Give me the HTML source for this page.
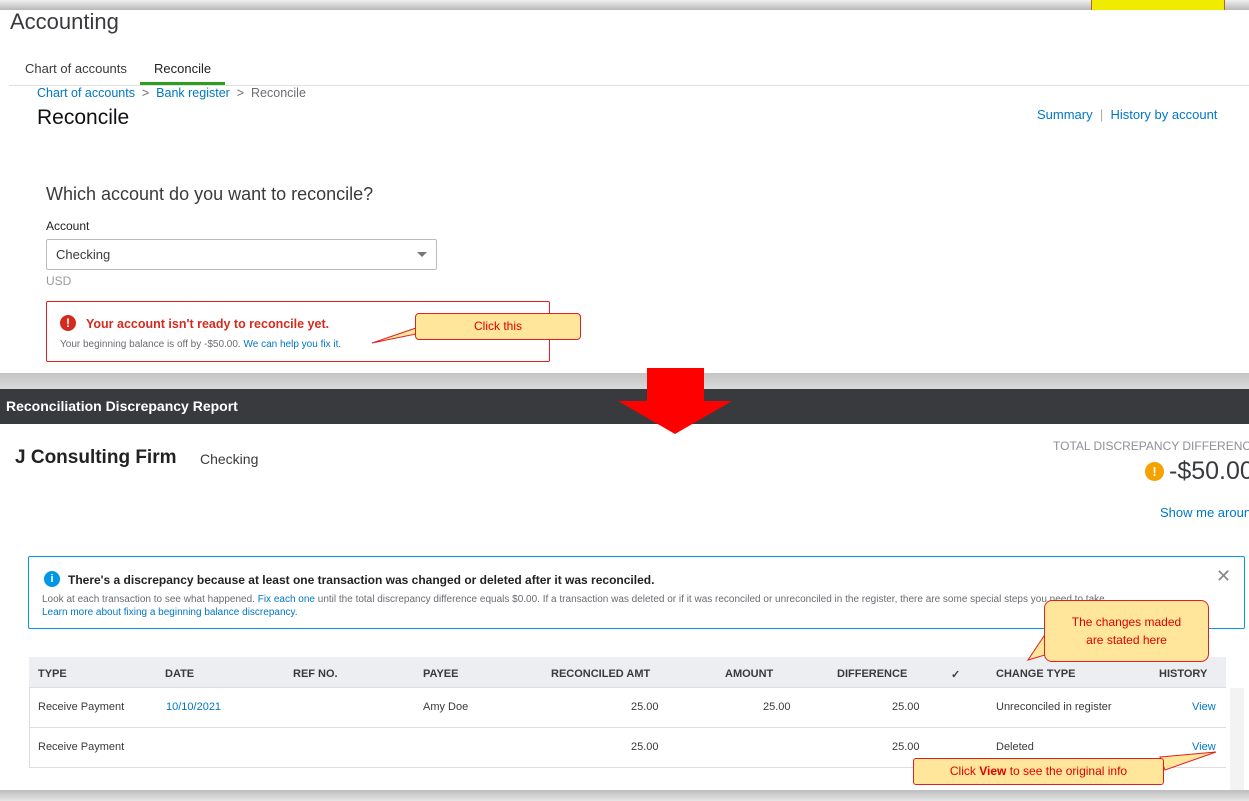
<!DOCTYPE html>
<html><head><meta charset="utf-8"><style>
*{margin:0;padding:0;box-sizing:border-box}
body{width:1249px;height:801px;position:relative;overflow:hidden;background:#d6d6d6;font-family:"Liberation Sans",sans-serif;color:#393a3d}
.a{position:absolute;white-space:nowrap}
.th{font-size:11px;font-weight:bold;color:#393a3d;top:668px}
.td{font-size:11px;color:#393a3d}
.blue{color:#0077c5 !important}
</style></head><body>
<div class="a" style="left:0;top:0;width:1249px;height:10px;background:linear-gradient(#f0f0f0,#b8b8b8)"></div>
<div class="a" style="left:1091px;top:0;width:134px;height:10px;background:#f0ec00;border-left:1px solid #c06020;border-right:1px solid #c06020"></div>
<!-- top panel -->
<div class="a" style="left:0;top:10px;width:1249px;height:363px;background:#fff"></div>
<div class="a" style="left:10px;top:9px;font-size:22px;color:#393a3d">Accounting</div>
<div class="a" style="left:25px;top:61px;font-size:13px">Chart of accounts</div>
<div class="a" style="left:154px;top:61px;font-size:13px;color:#222">Reconcile</div>
<div class="a" style="left:140px;top:82px;width:85px;height:3px;background:#2ca01c"></div>
<div class="a" style="left:9px;top:85px;width:1240px;height:1px;background:#e0e0e0"></div>
<div class="a" style="left:37px;top:86px;font-size:12.5px;color:#6b6c72"><span class="blue">Chart of accounts</span> &nbsp;&gt;&nbsp; <span class="blue">Bank register</span> &nbsp;&gt;&nbsp; Reconcile</div>
<div class="a" style="left:37px;top:106px;font-size:21px;color:#111">Reconcile</div>
<div class="a" style="left:1037px;top:107px;font-size:13px" ><span class="blue">Summary</span> <span style="color:#aaa">&nbsp;|&nbsp;</span> <span class="blue">History by account</span></div>
<div class="a" style="left:46px;top:184px;font-size:18px;color:#393a3d">Which account do you want to reconcile?</div>
<div class="a" style="left:46px;top:219px;font-size:12px;color:#222">Account</div>
<div class="a" style="left:46px;top:239px;width:391px;height:31px;border:1px solid #bbb;border-radius:2px"></div>
<div class="a" style="left:56px;top:247px;font-size:13px;color:#393a3d">Checking</div>
<div class="a" style="left:417px;top:252px;width:0;height:0;border-left:5px solid transparent;border-right:5px solid transparent;border-top:5px solid #777"></div>
<div class="a" style="left:46px;top:274px;font-size:12px;color:#999">USD</div>
<div class="a" style="left:46px;top:301px;width:504px;height:61px;border:1px solid #e02020;border-radius:2px"></div>
<div class="a" style="left:60px;top:315px;width:16px;height:16px;border-radius:50%;background:#d52b1e;color:#fff;font-size:12px;font-weight:bold;text-align:center;line-height:16px">!</div>
<div class="a" style="left:86px;top:317px;font-size:12.5px;font-weight:bold;color:#d52b1e">Your account isn't ready to reconcile yet.</div>
<div class="a" style="left:60px;top:339px;font-size:10px;color:#6b6c72">Your beginning balance is off by -$50.00. <span class="blue">We can help you fix it.</span></div>
<svg class="a" style="left:320px;top:310px" width="120" height="45"><polygon points="96,18 52,33 96,24" fill="#ffe69a" stroke="#e02020" stroke-width="1"/></svg>
<div class="a" style="left:415px;top:313px;width:166px;height:27px;background:#ffe69a;border:1px solid #e02020;border-radius:4px;color:#e00000;font-size:12px;text-align:center;line-height:25px">Click this</div>
<!-- gray band -->
<div class="a" style="left:0;top:373px;width:1249px;height:16px;background:linear-gradient(#c4c4c4,#dadada)"></div>
<!-- bottom panel -->
<div class="a" style="left:0;top:389px;width:1249px;height:35px;background:#393a3d"></div>
<div class="a" style="left:6px;top:398px;font-size:14px;font-weight:bold;color:#fff">Reconciliation Discrepancy Report</div>
<div class="a" style="left:0;top:424px;width:1249px;height:366px;background:#fff"></div>
<div class="a" style="left:0;top:790px;width:1249px;height:11px;background:linear-gradient(#bdbdbd,#e6e6e6)"></div>
<div class="a" style="left:15px;top:447px;font-size:19px;font-weight:bold;color:#222">J Consulting Firm</div>
<div class="a" style="left:200px;top:451px;font-size:14px;color:#393a3d">Checking</div>
<div class="a" style="left:1053px;top:439px;font-size:12px;color:#8d9096">TOTAL DISCREPANCY DIFFERENCE</div>
<div class="a" style="left:1145px;top:462px;width:19px;height:19px;border-radius:50%;background:#f5a100;color:#fff;font-size:13px;font-weight:bold;text-align:center;line-height:19px">!</div>
<div class="a" style="left:1169px;top:457px;font-size:25px;color:#393a3d">-$50.00</div>
<div class="a blue" style="left:1160px;top:505px;font-size:13px">Show me around</div>
<div class="a" style="left:28px;top:556px;width:1217px;height:73px;border:1px solid #0097e6;border-radius:2px"></div>
<div class="a" style="left:44px;top:571px;width:16px;height:16px;border-radius:50%;background:#0097e6;color:#fff;font-size:11px;font-weight:bold;text-align:center;line-height:16px">i</div>
<div class="a" style="left:68px;top:573px;font-size:12px;font-weight:bold;color:#222">There's a discrepancy because at least one transaction was changed or deleted after it was reconciled.</div>
<div class="a" style="left:1216px;top:566px;font-size:18px;color:#888">✕</div>
<div class="a" style="left:42px;top:594px;font-size:10px;color:#6b6c72">Look at each transaction to see what happened. <span class="blue">Fix each one</span> until the total discrepancy difference equals $0.00. If a transaction was deleted or if it was reconciled or unreconciled in the register, there are some special steps you need to take.</div>
<div class="a blue" style="left:42px;top:607px;font-size:10px">Learn more about fixing a beginning balance discrepancy.</div>
<!-- table -->
<div class="a" style="left:29px;top:657px;width:1197px;height:31px;background:#eceef1;border-bottom:1px solid #ddd"></div>
<div class="a th" style="left:38px">TYPE</div>
<div class="a th" style="left:165px">DATE</div>
<div class="a th" style="left:293px">REF NO.</div>
<div class="a th" style="left:423px">PAYEE</div>
<div class="a th" style="left:551px">RECONCILED AMT</div>
<div class="a th" style="left:725px">AMOUNT</div>
<div class="a th" style="left:837px">DIFFERENCE</div>
<div class="a th" style="left:951px">✓</div>
<div class="a th" style="left:996px">CHANGE TYPE</div>
<div class="a th" style="left:1159px">HISTORY</div>
<div class="a" style="left:29px;top:688px;width:1px;height:80px;background:#ddd"></div>
<div class="a" style="left:29px;top:727px;width:1197px;height:1px;background:#ddd"></div>
<div class="a" style="left:29px;top:767px;width:1197px;height:1px;background:#ddd"></div>
<div class="a" style="left:1230px;top:688px;width:14px;height:102px;background:#f3f3f3"></div>
<div class="a td" style="left:38px;top:701px">Receive Payment</div>
<div class="a td blue" style="left:166px;top:701px">10/10/2021</div>
<div class="a td" style="left:423px;top:701px">Amy Doe</div>
<div class="a td" style="left:631px;top:701px">25.00</div>
<div class="a td" style="left:763px;top:701px">25.00</div>
<div class="a td" style="left:892px;top:701px">25.00</div>
<div class="a td" style="left:996px;top:701px">Unreconciled in register</div>
<div class="a td blue" style="left:1192px;top:701px">View</div>
<div class="a td" style="left:38px;top:741px">Receive Payment</div>
<div class="a td" style="left:631px;top:741px">25.00</div>
<div class="a td" style="left:892px;top:741px">25.00</div>
<div class="a td" style="left:996px;top:741px">Deleted</div>
<div class="a td blue" style="left:1192px;top:741px">View</div>
<!-- callouts -->
<svg class="a" style="left:1020px;top:630px" width="50" height="40"><polygon points="28,0 8,30 42,20" fill="#ffe69a" stroke="#e02020"/></svg>
<div class="a" style="left:1044px;top:600px;width:165px;height:62px;background:#ffe69a;border:1px solid #e02020;border-radius:8px;color:#e00000;font-size:12px;text-align:center;line-height:18px;padding-top:12px">The changes maded<br>are stated here</div>
<svg class="a" style="left:1130px;top:745px" width="90" height="35"><polygon points="30,12 86,7 35,25" fill="#ffe69a" stroke="#e02020"/></svg>
<div class="a" style="left:913px;top:758px;width:251px;height:27px;background:#ffe69a;border:1px solid #e02020;border-radius:3px;color:#e00000;font-size:12px;text-align:center;line-height:25px">Click <b>View</b> to see the original info</div>
<!-- arrow -->
<svg class="a" style="left:0;top:0" width="1249" height="801"><polygon points="647,368 704,368 704,401 732,401 675,434 618,401 647,401" fill="#ff0000"/></svg>
</body></html>
